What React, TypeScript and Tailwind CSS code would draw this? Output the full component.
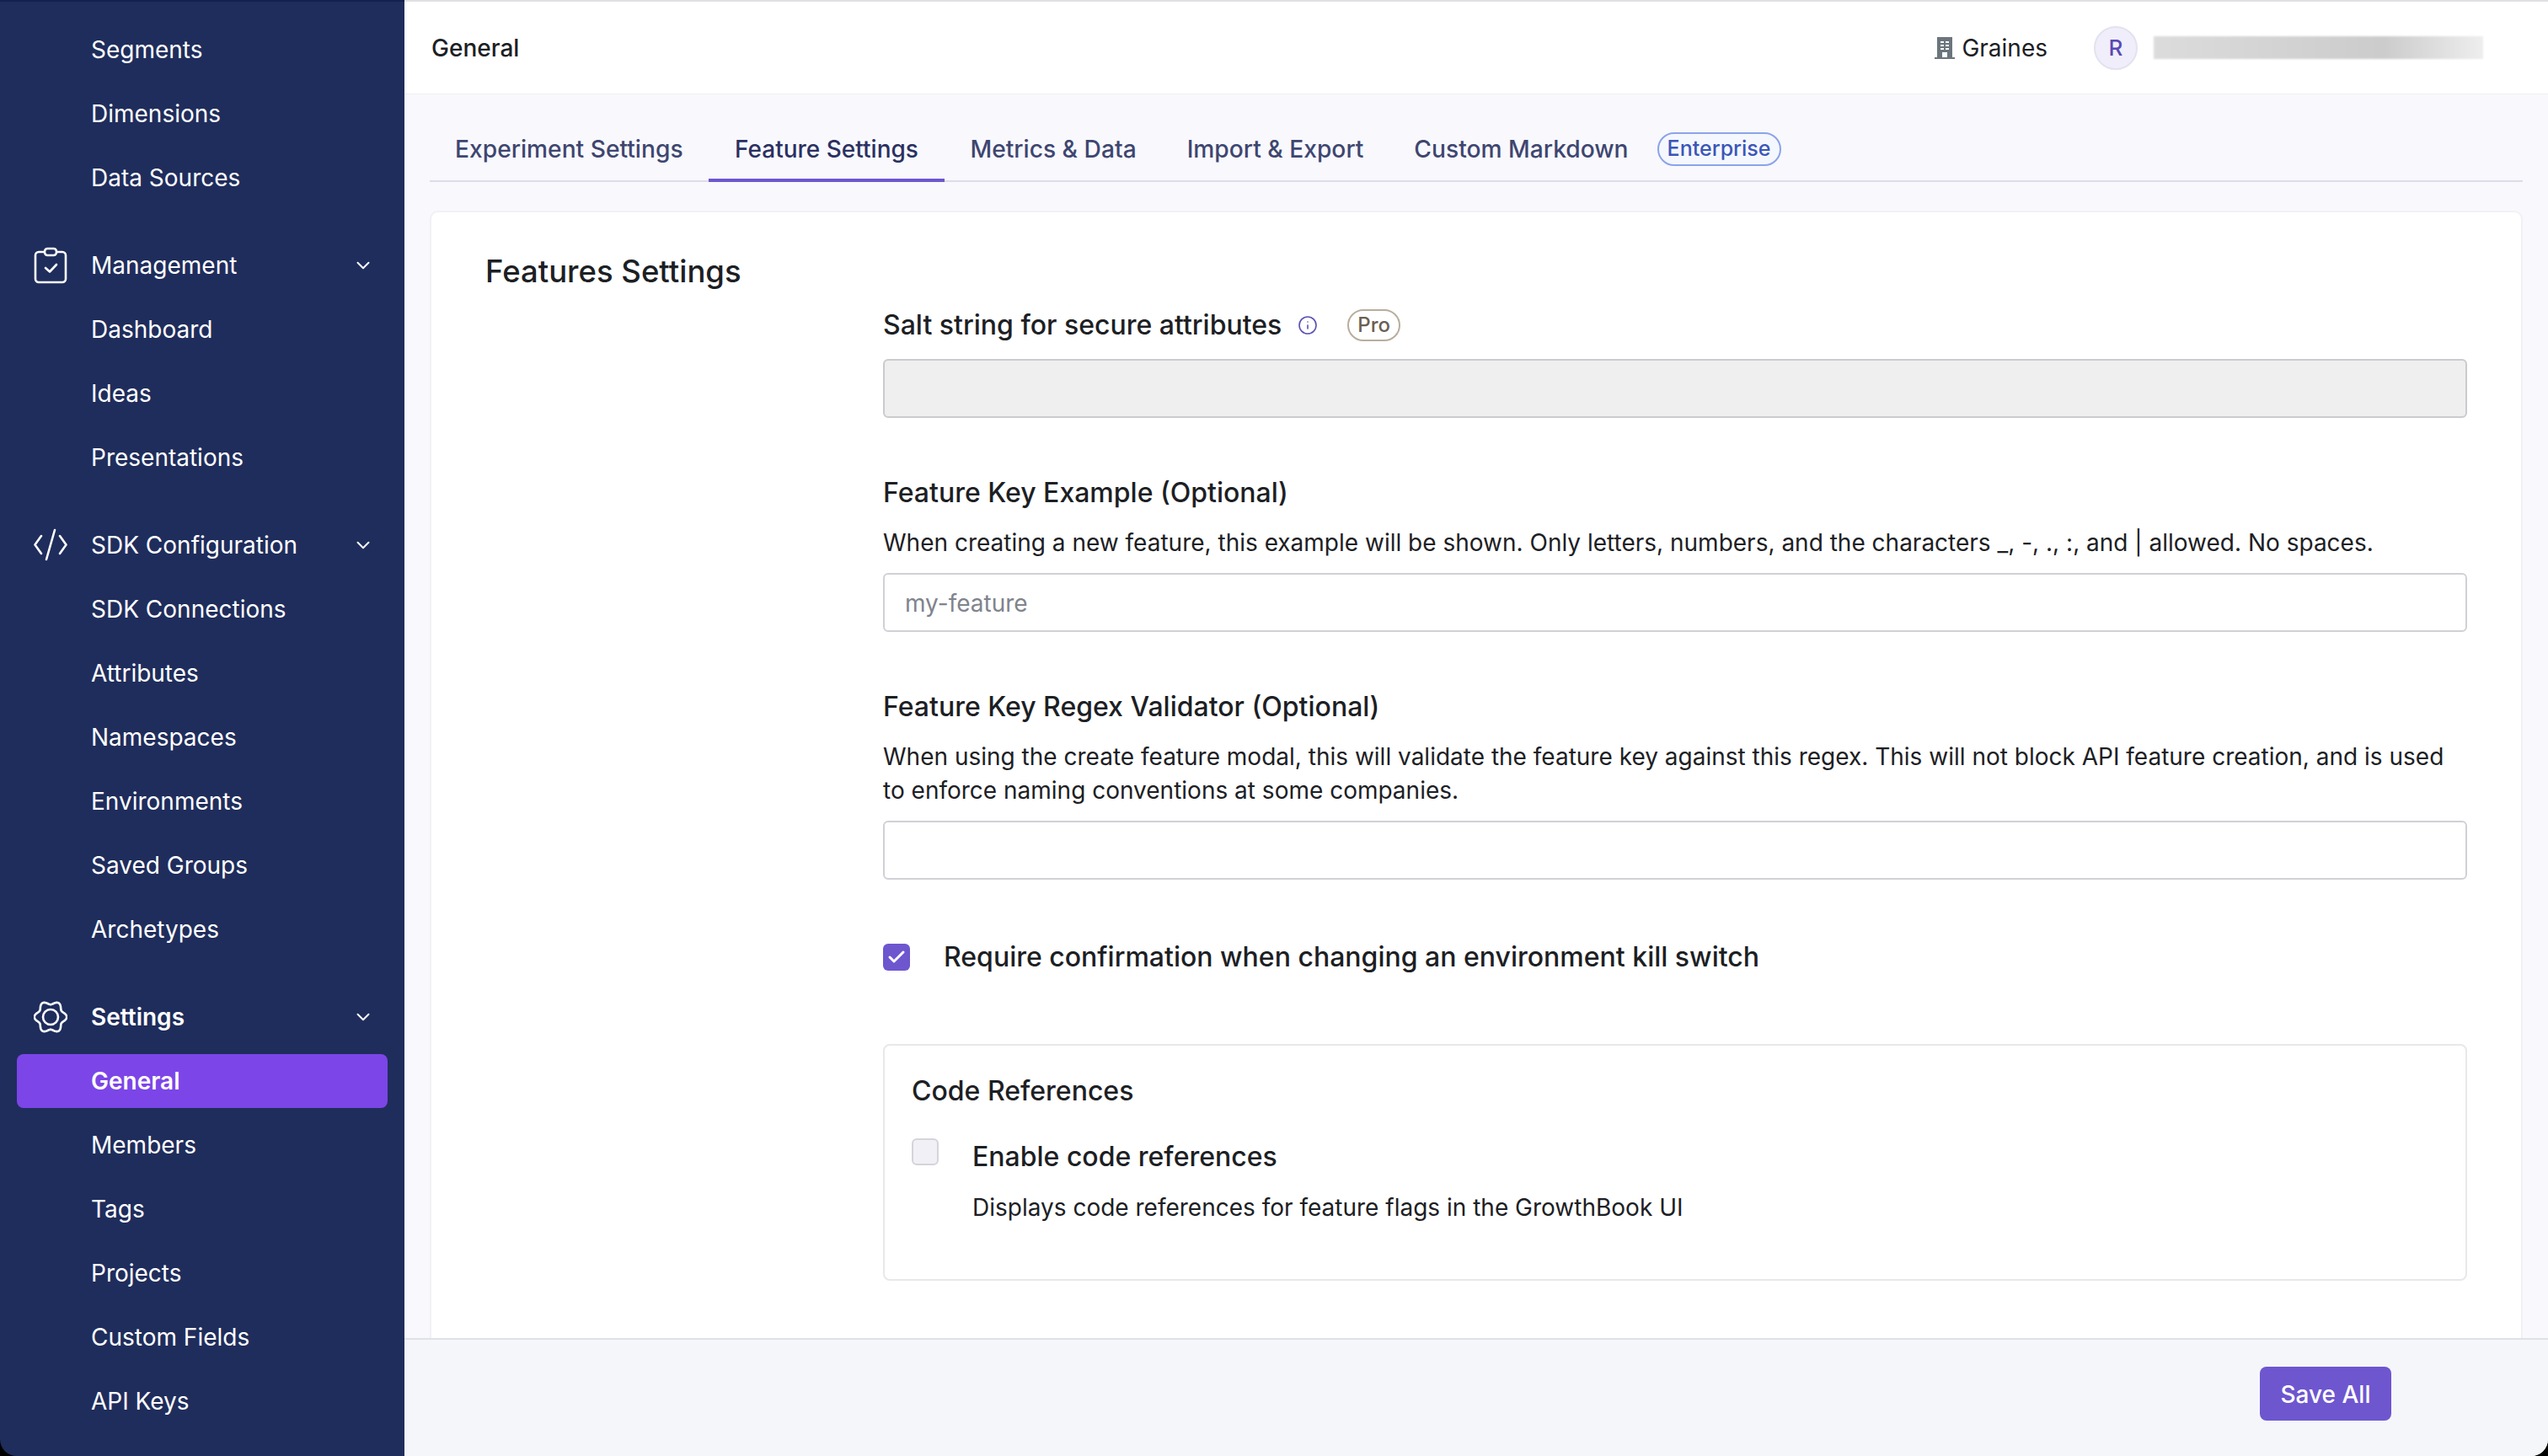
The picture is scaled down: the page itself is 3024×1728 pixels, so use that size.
import { ChevronDown, Check, Info } from 'lucide-react';

const groups = [
  { items: ['Segments', 'Dimensions', 'Data Sources'] },
  { title: 'Management', icon: 'clipboard', items: ['Dashboard', 'Ideas', 'Presentations'] },
  {
    title: 'SDK Configuration',
    icon: 'code',
    items: ['SDK Connections', 'Attributes', 'Namespaces', 'Environments', 'Saved Groups', 'Archetypes'],
  },
  { title: 'Settings', icon: 'gear', bold: true, items: ['General', 'Members', 'Tags', 'Projects', 'Custom Fields', 'API Keys'] },
];

const tabs = ['Experiment Settings', 'Feature Settings', 'Metrics & Data', 'Import & Export', 'Custom Markdown'];

function gearPath() {
  // wavy outline with six lobes
  const pts: string[] = [];
  for (let i = 0; i <= 120; i++) {
    const a = (i / 120) * Math.PI * 2;
    const r = 17 + 2.2 * Math.cos(6 * a);
    pts.push(`${(20 + r * Math.cos(a)).toFixed(2)},${(20 + r * Math.sin(a)).toFixed(2)}`);
  }
  return `M${pts.join('L')}Z`;
}

function NavIcon({ name }: { name?: string }) {
  if (name === 'clipboard') {
    return (
      <svg width="40" height="44" viewBox="0 0 40 44" fill="none" stroke="white" strokeWidth="2.6" strokeLinecap="round" strokeLinejoin="round">
        <path d="M12 6H6a4 4 0 0 0-4 4v28a4 4 0 0 0 4 4h28a4 4 0 0 0 4-4V10a4 4 0 0 0-4-4h-6" />
        <rect x="13" y="2" width="14" height="8" rx="3.5" />
        <path d="M14 25l5 4.5 8-8.5" />
      </svg>
    );
  }
  if (name === 'code') {
    return (
      <svg width="40" height="40" viewBox="0 0 40 40" fill="none" stroke="white" strokeWidth="2.6" strokeLinecap="round" strokeLinejoin="round">
        <path d="M9 9L1.5 19.5 9 30" />
        <path d="M31 9l7.500 10.500L31 30" />
        <path d="M25 2L15 37" />
      </svg>
    );
  }
  if (name === 'gear') {
    return (
      <svg width="40" height="40" viewBox="0 0 40 40" fill="none" stroke="white" strokeWidth="2.6" strokeLinejoin="round">
        <path d={gearPath()} />
        <circle cx="20" cy="20" r="9" />
      </svg>
    );
  }
  return null;
}

function Sidebar() {
  return (
    <aside className="flex h-full w-[480px] shrink-0 flex-col gap-[28px] overflow-hidden rounded-bl-[20px] border-t-2 border-[#14204d] bg-[#1f2d5c] pt-[19px] text-[28px] text-white">
      {groups.map((g, i) => (
        <div key={i} className="flex flex-col">
          {g.title && (
            <div className={`flex h-[76px] items-center pl-[40px] pr-[36px] ${g.bold ? 'font-semibold' : ''}`}>
              <span className="flex w-[68px] shrink-0 items-center">
                <NavIcon name={g.icon} />
              </span>
              <span className="flex-1">{g.title}</span>
              <ChevronDown size={26} strokeWidth={1.8} />
            </div>
          )}
          {g.items.map((item) => {
            const active = item === 'General';
            return (
              <div key={item} className="h-[76px] px-[20px] py-[6px]">
                <div className={`flex h-[64px] items-center rounded-[8px] pl-[88px] ${active ? 'bg-[#7c45e8] font-semibold' : ''}`}>{item}</div>
              </div>
            );
          })}
        </div>
      ))}
    </aside>
  );
}

function Header() {
  return (
    <header className="flex h-[112px] shrink-0 items-center border-t-2 border-b border-[#dfe0e4] border-b-[#eeeef3] bg-white pl-[32px] pr-[77px]">
      <h1 className="flex-1 text-[28px] font-medium text-[#1c2024]">General</h1>
      <svg width="24" height="26" viewBox="0 0 24 26" className="mr-[8px]">
        <rect x="3" y="0" width="18" height="25" fill="#6c757d" />
        <rect x="0" y="24" width="24" height="2" fill="#6c757d" />
        <g fill="white">
          <rect x="7" y="5" width="4" height="2" />
          <rect x="13" y="5" width="4" height="2" />
          <rect x="7" y="9" width="4" height="2" />
          <rect x="13" y="9" width="4" height="2" />
          <rect x="7" y="13" width="4" height="2" />
          <rect x="13" y="13" width="4" height="2" />
          <rect x="9" y="18" width="6" height="6" />
        </g>
      </svg>
      <span className="text-[28px] text-[#1c2024]">Graines</span>
      <span className="ml-[55px] flex h-[52px] w-[52px] items-center justify-center rounded-full border-2 border-[#e4e2ef] bg-[#f0eefa] text-[26px] font-medium text-[#5a48b5]">R</span>
      <div className="ml-[19px] h-[27px] w-[391px] bg-gradient-to-r from-[#dcdcdc] via-[#cccccc] via-70% to-[#eeeeee] blur-[1px]" />
    </header>
  );
}

function Tabs() {
  return (
    <div className="mx-[30px] mt-[42px] flex h-[62px] shrink-0 items-start border-b-2 border-[#dddce8]">
      {tabs.map((t) => {
        const active = t === 'Feature Settings';
        return (
          <div
            key={t}
            className={`flex h-[62px] items-center font-medium ${
              active ? 'border-b-4 border-[#6e56cf] px-[31.5px] pb-[12px] text-[28px] text-[#2b3060]' : 'px-[30px] pb-[16px] text-[28.2px] text-[#3e4670]'
            }`}
          >
            {t}
          </div>
        );
      })}
      <span className="ml-[4px] mt-[3px] flex h-[40px] items-center rounded-full border-2 border-[#8aa4e8] bg-[#f5f7fe] px-[10px] text-[25px] font-medium text-[#3a56b8]">Enterprise</span>
    </div>
  );
}

function FieldLabel({ children }: { children: React.ReactNode }) {
  return <div className="flex h-[40px] items-center text-[32px] font-medium text-[#1c2024]">{children}</div>;
}

function Desc({ children }: { children: React.ReactNode }) {
  return <p className="mt-[19px] text-[28px] leading-[40px] text-[#1c2024]">{children}</p>;
}

function TextInput({ disabled, placeholder }: { disabled?: boolean; placeholder?: string }) {
  return (
    <div
      className={`flex h-[70px] items-center rounded-[6px] border-2 px-[24px] pt-[2px] text-[28px] text-[#80838d] ${
        disabled ? 'border-[#cbcbcf] bg-[#efeff0]' : 'mt-[16px] border-[#d0d0d6] bg-white'
      }`}
    >
      {placeholder}
    </div>
  );
}

function FeatureSettings() {
  return (
    <section className="mx-[30px] mt-[34px] flex-1 rounded-t-[10px] border-2 border-b-0 border-[#f1f1f5] bg-white pb-[40px] pl-[64px] pr-[64px] pt-[48px]">
      <h2 className="text-[36.5px] leading-[44px] font-medium text-[#1c2024]">Features Settings</h2>
      <div className="ml-[472px] mt-[22px] flex flex-col">
        <FieldLabel>
          Salt string for secure attributes
          <Info size={24} strokeWidth={1.6} className="ml-[19px] text-[#5b50b5]" />
          <span className="ml-[35px] flex h-[38px] items-center rounded-full border-2 border-[#b9ad9d] px-[10px] text-[24px] font-medium text-[#6b5f52]">Pro</span>
        </FieldLabel>
        <div className="mt-[20px]">
          <TextInput disabled />
        </div>

        <div className="mt-[69px]">
          <FieldLabel>Feature Key Example (Optional)</FieldLabel>
          <Desc>When creating a new feature, this example will be shown. Only letters, numbers, and the characters _, -, ., :, and | allowed. No spaces.</Desc>
          <TextInput placeholder="my-feature" />
        </div>

        <div className="mt-[69px]">
          <FieldLabel>Feature Key Regex Validator (Optional)</FieldLabel>
          <Desc>
            When using the create feature modal, this will validate the feature key against this regex. This will not block API feature creation, and is used to enforce naming conventions at some companies.
          </Desc>
          <TextInput />
        </div>

        <label className="mt-[72px] flex h-[40px] items-center">
          <span className="flex h-[32px] w-[32px] items-center justify-center rounded-[6px] bg-[#6e56cf] text-white">
            <Check size={24} strokeWidth={3} />
          </span>
          <span className="ml-[40px] text-[32px] font-medium text-[#1c2024]">Require confirmation when changing an environment kill switch</span>
        </label>

        <div className="mt-[83px] h-[281px] rounded-[8px] border-2 border-[#e8e8ec] px-[32px] pt-[34px]">
          <h3 className="text-[32px] leading-[40px] font-medium text-[#1c2024]">Code References</h3>
          <div className="mt-[34px] flex items-start">
            <span className="mt-[2px] h-[32px] w-[32px] shrink-0 rounded-[6px] border-2 border-[#d4d4dc] bg-[#f0f0f6]" />
            <div className="ml-[40px]">
              <div className="pt-[4px] text-[32px] leading-[40px] font-medium text-[#1c2024]">Enable code references</div>
              <p className="mt-[20px] text-[28px] leading-[40px] text-[#1c2024]">Displays code references for feature flags in the GrowthBook UI</p>
            </div>
          </div>
        </div>
      </div>
    </section>
  );
}

export default function App() {
  return (
    <div className="flex h-screen w-screen overflow-hidden bg-black font-['Inter',sans-serif]">
      <Sidebar />
      <main className="flex h-full min-w-0 flex-1 flex-col overflow-hidden rounded-br-[20px] bg-[#f8f8fd]">
        <Header />
        <Tabs />
        <div className="flex min-h-0 flex-1 flex-col overflow-hidden">
          <FeatureSettings />
        </div>
        <footer className="flex h-[140px] shrink-0 items-start justify-end border-t-2 border-[#e0e1e6] bg-[#f5f6fa] pr-[186px] pt-[32px]">
          <button className="h-[64px] w-[156px] rounded-[8px] bg-[#6e56cf] pt-[2px] text-[28px] font-medium text-white">Save All</button>
        </footer>
      </main>
    </div>
  );
}
